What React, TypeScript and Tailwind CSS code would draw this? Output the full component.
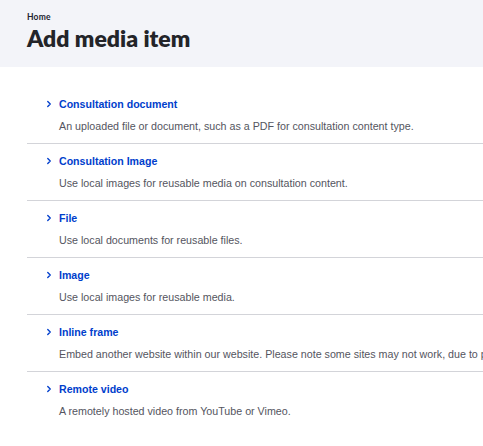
import { ChevronRight } from "lucide-react";

const MEDIA_TYPES = [
  {
    label: "Consultation document",
    description: "An uploaded file or document, such as a PDF for consultation content type.",
  },
  {
    label: "Consultation Image",
    description: "Use local images for reusable media on consultation content.",
  },
  { label: "File", description: "Use local documents for reusable files." },
  { label: "Image", description: "Use local images for reusable media." },
  {
    label: "Inline frame",
    description:
      "Embed another website within our website. Please note some sites may not work, due to privacy settings.",
  },
  { label: "Remote video", description: "A remotely hosted video from YouTube or Vimeo." },
];

function PageHeader() {
  return (
    <header className="bg-[#f3f4f9] pl-[27px] pt-[11px] pb-[15px]">
      <div className="text-[8.5px] font-bold leading-[12px] tracking-[0.02em] text-[#222330] [font-family:Lato,sans-serif]">
        Home
      </div>
      <h1 className="mt-[2px] text-[23px] font-extrabold leading-[27px] text-[#232429] [font-family:Lato,sans-serif]">
        Add media item
      </h1>
    </header>
  );
}

export default function App() {
  return (
    <div className="min-h-[446px] overflow-hidden bg-white [font-family:'Liberation_Sans',Arial,sans-serif]">
      <PageHeader />
      <ul className="ml-[27px] mt-[20px] w-[640px]">
        {MEDIA_TYPES.map((t, i) => (
          <li
            key={t.label}
            className={
              "flex flex-col pl-[32px] pt-[9px] pb-[9px] " +
              (i < MEDIA_TYPES.length - 1 ? "border-b border-[#d3d4d9]" : "")
            }
          >
            <a href="#" className="relative text-[10.6px] font-bold leading-[16px] text-[#003ecc]">
              <ChevronRight
                className="absolute left-[-15px] top-[3px] size-[10px]"
                strokeWidth={3.2}
                aria-hidden
              />
              {t.label}
            </a>
            <p className="mt-[6px] whitespace-nowrap text-[10.7px] leading-[16px] text-[#545560]">
              {t.description}
            </p>
          </li>
        ))}
      </ul>
    </div>
  );
}
